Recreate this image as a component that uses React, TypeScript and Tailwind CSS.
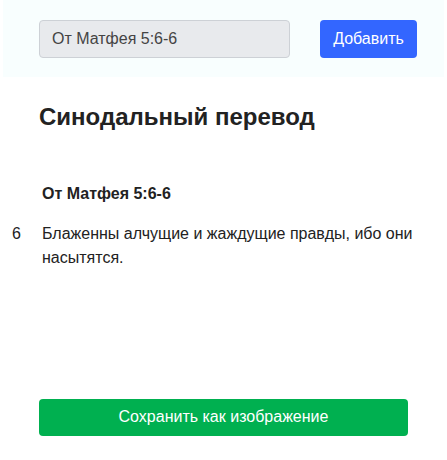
import React from 'react';

const verses = [
  { num: 6, text: 'Блаженны алчущие и жаждущие правды, ибо они насытятся.' },
];

export default function App() {
  return (
    <div className="min-h-[460px] bg-white font-['Liberation_Sans',Arial,sans-serif] text-[#222]">
      <div className="mx-[3px] h-[77px] bg-[#f8fefe] flex items-center pl-[36px] gap-[30px]">
        <input
          className="w-[251px] h-[38px] rounded-[4px] border border-[#cdd1d6] bg-[#e8eaed] px-[12px] text-[16px] text-[#444] outline-none"
          defaultValue="От Матфея 5:6-6"
        />
        <button className="w-[97px] h-[38px] rounded-[4px] bg-[#3366ff] text-white text-[16px]">
          Добавить
        </button>
      </div>

      <div className="px-[39px]">
        <h1 className="mt-[26px] text-[24px] leading-[1.2] font-bold">Синодальный перевод</h1>
      </div>

      <div className="mt-[50px] pr-[30px]">
        <div className="pl-[42px] text-[16px] leading-[24px] font-bold">От Матфея 5:6-6</div>
        <div className="mt-[16px] flex flex-col">
          {verses.map((v) => (
            <div key={v.num} className="flex text-[16px] leading-[24px]">
              <span className="w-[42px] pl-[12px] shrink-0">{v.num}</span>
              <span className="flex-1">{v.text}</span>
            </div>
          ))}
        </div>
      </div>

      <div className="px-[39px] mt-[129px]">
        <button className="w-full h-[37px] rounded-[4px] bg-[#00b050] text-white text-[16px]">
          Сохранить как изображение
        </button>
      </div>
    </div>
  );
}
